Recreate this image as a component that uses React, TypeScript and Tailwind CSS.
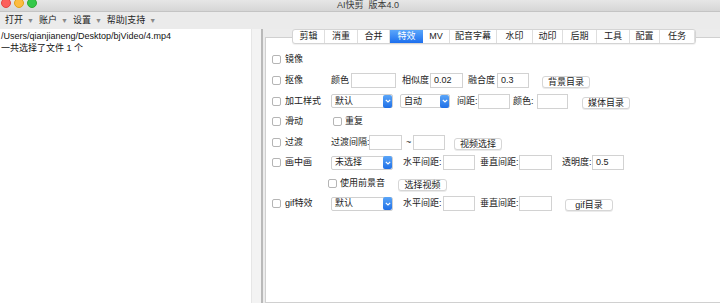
import React from "react";

const FONT = { fontFamily: '"Liberation Sans", "Noto Sans CJK SC", sans-serif' };

function Check({ className = "" }: { className?: string }) {
  return (
    <span
      className={`inline-block w-[9px] h-[9px] shrink-0 rounded-[2px] border border-[#b5b5b5] bg-white ${className}`}
    />
  );
}

function Label({ w, ml = 0, children }: { w: number; ml?: number; children: React.ReactNode }) {
  return (
    <span
      className="shrink-0 whitespace-nowrap text-[9px] leading-none text-[#222]"
      style={{ width: w, marginLeft: ml }}
    >
      {children}
    </span>
  );
}

function Input({ w, ml = 0, value = "" }: { w: number; ml?: number; value?: string }) {
  return (
    <span
      className="shrink-0 h-[15px] border border-[#d2d2d2] bg-white text-[9px] leading-[13px] pl-[3px] text-[#222]"
      style={{ width: w, marginLeft: ml }}
    >
      {value}
    </span>
  );
}

function Btn({ w, ml = 0, children }: { w: number; ml?: number; children: React.ReactNode }) {
  return (
    <span
      className="shrink-0 mt-[3px] h-[12px] rounded-[3px] border border-[#d6d6d6] bg-white shadow-[0_1px_0_rgba(0,0,0,0.08)] text-[9px] leading-[10px] text-center text-[#222]"
      style={{ width: w, marginLeft: ml }}
    >
      {children}
    </span>
  );
}

function Select({ w, ml = 0, value }: { w: number; ml?: number; value: string }) {
  return (
    <span
      className="shrink-0 flex items-center justify-between h-[14px] rounded-[2px] border border-[#d0d0d0] bg-white text-[9px] leading-none text-[#222]"
      style={{ width: w, marginLeft: ml }}
    >
      <span className="pl-[3px]">{value}</span>
      <span className="flex items-center justify-center w-[9px] h-[13px] rounded-[2px] bg-gradient-to-b from-[#5aa5f8] to-[#1f6fe6]">
        <svg width="6" height="4" viewBox="0 0 6 4">
          <path d="M0.8 0.8 L3 3 L5.2 0.8" stroke="white" strokeWidth="1.2" fill="none" />
        </svg>
      </span>
    </span>
  );
}

function Row({ children }: { children: React.ReactNode }) {
  return <div className="flex items-center h-[20.57px]">{children}</div>;
}

function Cell({ label }: { label: string }) {
  return (
    <span className="shrink-0 flex items-center w-[59px]">
      <Check />
      <span className="ml-[4px] text-[9px] leading-none text-[#222] whitespace-nowrap">{label}</span>
    </span>
  );
}

const tabs = ["剪辑", "消重", "合并", "特效", "MV", "配音字幕", "水印", "动印", "后期", "工具", "配置", "任务"];
const tabW = [32, 33, 32, 33, 27, 47, 36, 30, 34, 33, 30, 35];

export default function App() {
  return (
    <div className="w-[720px] h-[303px] overflow-hidden flex flex-col bg-white" style={FONT}>
      {/* title bar */}
      <div className="relative h-[12px] shrink-0 bg-gradient-to-b from-[#e6e6e6] to-[#d6d6d6] border-b border-[#c4c4c4] flex items-center">
        <div className="flex gap-[3px] pl-[1px] -mt-[5px]">
          <span className="w-[10px] h-[10px] rounded-full bg-[#fc605c] border border-[#e2463f]" />
          <span className="w-[10px] h-[10px] rounded-full bg-[#fdbc40] border border-[#e1a116]" />
          <span className="w-[10px] h-[10px] rounded-full bg-[#34c84a] border border-[#2dac2f]" />
        </div>
        <div className="absolute left-[337px] top-0 h-[11px] flex items-center text-[9px] leading-none text-[#3c3c3c] whitespace-nowrap">
          AI快剪&nbsp;&nbsp;版本4.0
        </div>
      </div>
      {/* menu bar */}
      <div className="h-[17px] shrink-0 bg-[#ebebeb] flex items-center pl-[5px] text-[9px] leading-none text-[#222] whitespace-nowrap">
        <span>打开</span>
        <span className="ml-[4px] text-[7px] text-[#888]">▼</span>
        <span className="ml-[5px]">账户</span>
        <span className="ml-[4px] text-[7px] text-[#888]">▼</span>
        <span className="ml-[5px]">设置</span>
        <span className="ml-[4px] text-[7px] text-[#888]">▼</span>
        <span className="ml-[5px]">帮助|支持</span>
        <span className="ml-[4px] text-[7px] text-[#888]">▼</span>
      </div>
      {/* main */}
      <div className="flex flex-1 min-h-0">
        <div className="w-[251px] shrink-0 bg-white pt-[1px] pl-[1px] text-[9px] leading-[12px] text-[#111]">
          <div>/Users/qianjianeng/Desktop/bjVideo/4.mp4</div>
          <div>一共选择了文件 1 个</div>
        </div>
        <div className="w-[12px] shrink-0 bg-[#f3f3f3] border-l border-[#e6e6e6] border-r-2 border-r-[#b9b9b9]" />
        <div className="flex-1 min-w-0 bg-[#ececec] pl-[2px] flex flex-col">
          <div className="relative z-10 flex pl-[27px] h-[15px] shrink-0">
            <div className="flex rounded-[3px] border border-[#d4d4d4] bg-white overflow-hidden shadow-[0_1px_1px_rgba(0,0,0,0.06)]">
              {tabs.map((t, i) => (
                <span
                  key={t}
                  className={
                    t === "特效"
                      ? "flex items-center justify-center h-[13px] text-[9px] leading-none text-white bg-gradient-to-b from-[#5aa6fa] to-[#1c6eee]"
                      : "flex items-center justify-center h-[13px] text-[9px] leading-none text-[#222] border-r border-[#dedede]"
                  }
                  style={{ width: tabW[i] }}
                >
                  {t}
                </span>
              ))}
            </div>
          </div>
          <div className="-mt-[7px] flex-1 bg-white border border-[#d0d0d0] border-r-0 pt-[11.7px] pl-[6px]">
            <Row>
              <Cell label="镜像" />
            </Row>
            <Row>
              <Cell label="抠像" />
              <Label w={20}>颜色</Label>
              <Input w={45} />
              <Label w={28} ml={6}>相似度</Label>
              <Input w={33} value="0.02" />
              <Label w={29} ml={5}>融合度</Label>
              <Input w={32} value="0.3" />
              <Btn w={48} ml={13}>背景目录</Btn>
            </Row>
            <Row>
              <Cell label="加工样式" />
              <Select w={62} value="默认" />
              <Select w={50} ml={7} value="自动" />
              <Label w={21} ml={7}>间距:</Label>
              <Input w={32} />
              <Label w={24} ml={3}>颜色:</Label>
              <Input w={31} />
              <Btn w={48} ml={14}>媒体目录</Btn>
            </Row>
            <Row>
              <Cell label="滑动" />
              <Check className="ml-[2px]" />
              <span className="ml-[3px] text-[9px] leading-none text-[#222]">重复</span>
            </Row>
            <Row>
              <Cell label="过渡" />
              <Label w={38}>过渡间隔:</Label>
              <Input w={33} />
              <Label w={11} ml={0}>
                <span className="pl-[4px]">~</span>
              </Label>
              <Input w={32} />
              <Btn w={48} ml={9}>视频选择</Btn>
            </Row>
            <Row>
              <Cell label="画中画" />
              <Select w={62} value="未选择" />
              <Label w={40} ml={10}>水平间距:</Label>
              <Input w={32} />
              <Label w={39} ml={5}>垂直间距:</Label>
              <Input w={33} />
              <Label w={30} ml={10}>透明度:</Label>
              <Input w={32} value="0.5" />
            </Row>
            <Row>
              <span className="shrink-0 w-[56px]" />
              <Check />
              <Label w={58} ml={3}>使用前景音</Label>
              <Btn w={49}>选择视频</Btn>
            </Row>
            <Row>
              <Cell label="gif特效" />
              <Select w={62} value="默认" />
              <Label w={40} ml={10}>水平间距:</Label>
              <Input w={32} />
              <Label w={39} ml={5}>垂直间距:</Label>
              <Input w={33} />
              <Btn w={48} ml={13}>gif目录</Btn>
            </Row>
          </div>
        </div>
      </div>
    </div>
  );
}
